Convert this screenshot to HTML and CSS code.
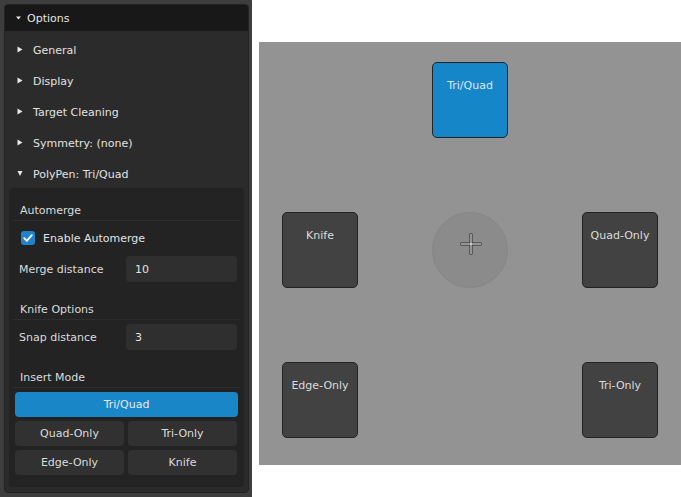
FILE: index.html
```html
<!DOCTYPE html>
<html>
<head>
<meta charset="utf-8">
<link rel="stylesheet" href="styles.css">
</head>
<body>
<div class="app">
  <aside class="sidebar">
    <div class="panel">
      <div class="panel-head">
        <svg class="tri-small" width="5" height="4" viewBox="0 0 5 4"><path d="M0 0.5 L5 0.5 L2.5 3.5 Z" fill="#e8e8e8"/></svg>
        <span>Options</span>
      </div>
      <div class="rows">
        <div class="row"><svg class="tri" width="6" height="7" viewBox="0 0 6 7"><path d="M0.5 0.5 L5.5 3.5 L0.5 6.5 Z" fill="#e8e8e8"/></svg><span>General</span></div>
        <div class="row"><svg class="tri" width="6" height="7" viewBox="0 0 6 7"><path d="M0.5 0.5 L5.5 3.5 L0.5 6.5 Z" fill="#e8e8e8"/></svg><span>Display</span></div>
        <div class="row"><svg class="tri" width="6" height="7" viewBox="0 0 6 7"><path d="M0.5 0.5 L5.5 3.5 L0.5 6.5 Z" fill="#e8e8e8"/></svg><span>Target Cleaning</span></div>
        <div class="row"><svg class="tri" width="6" height="7" viewBox="0 0 6 7"><path d="M0.5 0.5 L5.5 3.5 L0.5 6.5 Z" fill="#e8e8e8"/></svg><span>Symmetry: (none)</span></div>
        <div class="row"><svg class="tri" width="6" height="7" viewBox="0 0 6 7"><path d="M0.5 1 L5.5 1 L3 6 Z" fill="#e8e8e8"/></svg><span>PolyPen: Tri/Quad</span></div>
      </div>
      <div class="sub">
        <div class="sub-label">Automerge</div>
        <div class="check-row">
          <span class="checkbox"><svg width="14" height="14" viewBox="0 0 14 14"><path d="M3.2 7.2 L5.8 9.8 L10.8 4.2" fill="none" stroke="#ffffff" stroke-width="1.8" stroke-linecap="round" stroke-linejoin="round"/></svg></span>
          <span>Enable Automerge</span>
        </div>
        <div class="field-row">
          <span class="field-label">Merge distance</span>
          <div class="field">10</div>
        </div>
        <div class="sub-label spaced">Knife Options</div>
        <div class="field-row tight">
          <span class="field-label">Snap distance</span>
          <div class="field">3</div>
        </div>
        <div class="sub-label spaced">Insert Mode</div>
        <div class="btn active">Tri/Quad</div>
        <div class="btn-grid">
          <div class="btn">Quad-Only</div>
          <div class="btn">Tri-Only</div>
          <div class="btn">Edge-Only</div>
          <div class="btn">Knife</div>
        </div>
      </div>
    </div>
  </aside>
  <main class="stage">
    <div class="pie">
      <div class="cell"></div>
      <div class="pie-btn blue">Tri/Quad</div>
      <div class="cell"></div>
      <div class="pie-btn">Knife</div>
      <div class="center">
        <svg width="24" height="24" viewBox="0 0 24 24">
          <path d="M12 1.5 V22.5 M1.5 12 H22.5" stroke="#2a2a2a" stroke-width="3" fill="none"/>
          <path d="M12 2 V22 M2 12 H22" stroke="#ffffff" stroke-width="1" fill="none"/>
        </svg>
      </div>
      <div class="pie-btn">Quad-Only</div>
      <div class="pie-btn">Edge-Only</div>
      <div class="cell"></div>
      <div class="pie-btn">Tri-Only</div>
    </div>
  </main>
</div>
</body>
</html>
```
FILE: styles.css
```css
* { box-sizing: border-box; }
html, body {
  margin: 0;
  padding: 0;
  background: #ffffff;
  font-family: "DejaVu Sans", "Liberation Sans", sans-serif;
  font-size: 11px;
  color: #dcdcdc;
}
.app {
  display: flex;
  width: 681px;
  height: 497px;
}
.sidebar {
  width: 252px;
  height: 497px;
  background: #3d3d3d;
  padding: 4px 3px 4px 4px;
}
.panel {
  width: 245px;
  height: 489px;
  background: #2b2b2b;
  border: 1px solid #232323;
  border-radius: 4px;
  overflow: hidden;
}
.panel-head {
  height: 26px;
  background: #181818;
  display: flex;
  align-items: center;
  padding-left: 11px;
  color: #e6e6e6;
}
.tri-small { margin-right: 6px; margin-top: -1px; }
.rows { padding-top: 2px; }
.row {
  height: 31px;
  display: flex;
  align-items: center;
  padding-left: 12px;
  padding-top: 3px;
  color: #e2e2e2;
}
.tri { margin-right: 10px; margin-top: -1px; }
.sub {
  margin: 0 4px 0 4px;
  background: #232323;
  border-radius: 4px;
  padding: 11px 6px 12px 6px;
}
.sub-label {
  height: 22px;
  margin: 0 -2px;
  padding-left: 7px;
  padding-top: 2px;
  display: flex;
  align-items: center;
  border-bottom: 1px solid #2e2e2e;
  color: #dcdcdc;
}
.sub-label.spaced { margin-top: 16px; }
.check-row {
  margin-top: 5px;
  height: 24px;
  display: flex;
  align-items: center;
  padding-left: 6px;
  color: #e2e2e2;
}
.checkbox {
  width: 14px;
  height: 14px;
  border-radius: 3px;
  background: #1f85c8;
  margin-right: 8px;
  display: flex;
}
.field-row {
  margin-top: 6px;
  height: 26px;
  display: flex;
  align-items: center;
  justify-content: space-between;
  padding-left: 4px;
  padding-right: 1px;
}
.field-row.tight { margin-top: 4px; }
.field {
  width: 111px;
  height: 26px;
  background: #2f2f2f;
  border-radius: 4px;
  display: flex;
  align-items: center;
  padding-left: 9px;
  color: #e2e2e2;
}
.btn {
  height: 25px;
  background: #313131;
  border-radius: 4px;
  display: flex;
  align-items: center;
  justify-content: center;
  color: #dcdcdc;
}
.btn.active {
  margin-top: 4px;
  background: #1987c7;
  color: #eaeaea;
}
.btn-grid {
  margin-top: 4px;
  display: grid;
  grid-template-columns: 109px 109px;
  column-gap: 4px;
  row-gap: 4px;
}
.stage {
  margin-left: 7px;
  padding-top: 42px;
}
.pie {
  width: 422px;
  height: 423px;
  background: #939393;
  padding: 20px 0 0 23px;
  display: grid;
  grid-template-columns: 76px 76px 76px;
  grid-template-rows: 76px 76px 76px;
  column-gap: 74px;
  row-gap: 74px;
}
.pie-btn {
  background: #424242;
  border: 1px solid #232323;
  border-radius: 5px;
  text-align: center;
  padding-top: 16px;
  line-height: 13px;
  color: #dcdcdc;
}
.pie-btn.blue {
  background: #1586c8;
  color: #dde6ee;
}
.center {
  border-radius: 50%;
  background: #8b8b8b;
  border: 1px solid #868686;
  display: flex;
  justify-content: center;
  padding-top: 19px;
  padding-left: 2px;
}
.center svg { display: block; }
```
